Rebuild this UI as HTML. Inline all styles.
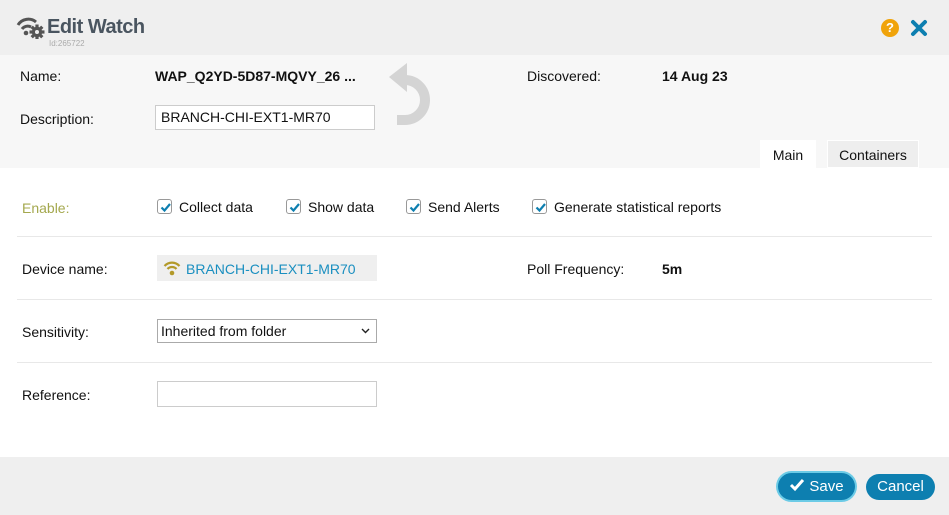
<!DOCTYPE html>
<html><head><meta charset="utf-8"><style>
*{box-sizing:border-box;margin:0;padding:0}
body{width:949px;height:515px;overflow:hidden;background:#fff;font-family:"Liberation Sans",sans-serif;font-size:14px;color:#111;position:relative}
.a{position:absolute;white-space:nowrap}
.hdr{left:0;top:0;width:949px;height:55px;background:#efefef}
.info{left:0;top:55px;width:949px;height:113px;background:#f7f7f7}
.ftr{left:0;top:457px;width:949px;height:58px;background:#efefef}
.line{left:17px;width:915px;height:1px;background:#e8e8e8}
.cb{display:inline-block;width:15px;height:15px;border:1px solid #999;border-radius:3px;background:#fff;vertical-align:-2px;margin-right:7px;position:relative}
.cb svg{position:absolute;left:1px;top:1px}
.inp{border:1px solid #ccc;background:#fff;height:25px}
.btn{background:#0d7fb0;color:#fff;border-radius:14px;height:27px;font-size:15px;text-align:center;line-height:27px}
</style></head><body>
<div class="a hdr"></div>
<div class="a info"></div>
<div class="a ftr"></div>

<svg class="a" style="left:16px;top:17px" width="30" height="22" viewBox="0 0 30 22">
<path d="M2 8 A12 12 0 0 1 20 5" stroke="#555" stroke-width="3" fill="none"/>
<path d="M6 12 A7 7 0 0 1 15 10" stroke="#555" stroke-width="3" fill="none"/>
<circle cx="10" cy="16" r="2.3" fill="#555"/>
<g transform="translate(21,15)" fill="#555"><circle r="5.2"/><rect x="-1.6" y="-7.5" width="3.2" height="15"/><rect x="-7.5" y="-1.6" width="15" height="3.2"/><rect x="-1.6" y="-7.5" width="3.2" height="15" transform="rotate(45)"/><rect x="-1.6" y="-7.5" width="3.2" height="15" transform="rotate(-45)"/><circle r="2" fill="#efefef"/></g>
</svg>
<div class="a" style="left:47px;top:16px;font-size:20px;font-weight:bold;color:#4a5560;letter-spacing:-0.5px">Edit Watch</div>
<div class="a" style="left:49px;top:39px;font-size:8px;color:#aaa">Id:265722</div>

<div class="a" style="left:881px;top:19px;width:18px;height:18px;border-radius:50%;background:#f0a30a;color:#fff;font-weight:bold;font-size:13px;text-align:center;line-height:18px">?</div>
<svg class="a" style="left:910px;top:19px" width="18" height="18" viewBox="0 0 18 18"><path d="M3 3 L15 15 M15 3 L3 15" stroke="#0d7fb0" stroke-width="4" stroke-linecap="round"/></svg>

<div class="a" style="left:20px;top:68px">Name:</div>
<div class="a" style="left:155px;top:68px;font-weight:bold">WAP_Q2YD-5D87-MQVY_26 ...</div>
<svg class="a" style="left:388px;top:60px" width="50" height="70" viewBox="0 0 50 70">
<path d="M14 20 H17 A20 20 0 0 1 17 60 H9" stroke="#d4d4d4" stroke-width="10" fill="none"/>
<polygon points="1,17 19,3 19,32" fill="#d4d4d4"/>
</svg>
<div class="a" style="left:527px;top:68px">Discovered:</div>
<div class="a" style="left:662px;top:68px;font-weight:bold">14 Aug 23</div>
<div class="a" style="left:20px;top:111px">Description:</div>
<div class="a inp" style="left:155px;top:105px;width:220px;padding:3px 5px;line-height:17px">BRANCH-CHI-EXT1-MR70</div>

<div class="a" style="left:760px;top:140px;width:56px;height:28px;background:#fff;text-align:center;line-height:30px">Main</div>
<div class="a" style="left:827px;top:140px;width:92px;height:28px;background:#eee;border:1px solid #fff;text-align:center;line-height:28px">Containers</div>

<div class="a" style="left:22px;top:200px;color:#a4a84e">Enable:</div>
<svg width="0" height="0" style="position:absolute"><defs><path id="ck" d="M2.5 6.5 L5.5 9.5 L11 3" stroke="#0d7fb0" stroke-width="2.2" fill="none"/></defs></svg>
<div class="a" style="left:157px;top:199px"><span class="cb"><svg width="13" height="13"><use href="#ck"/></svg></span>Collect data</div>
<div class="a" style="left:286px;top:199px"><span class="cb"><svg width="13" height="13"><use href="#ck"/></svg></span>Show data</div>
<div class="a" style="left:406px;top:199px"><span class="cb"><svg width="13" height="13"><use href="#ck"/></svg></span>Send Alerts</div>
<div class="a" style="left:532px;top:199px"><span class="cb"><svg width="13" height="13"><use href="#ck"/></svg></span>Generate statistical reports</div>

<div class="a line" style="top:236px"></div>
<div class="a" style="left:22px;top:261px">Device name:</div>
<div class="a" style="left:157px;top:255px;width:220px;height:26px;background:#efefef"></div>
<svg class="a" style="left:163px;top:260px" width="18" height="16" viewBox="0 0 18 16">
<path d="M1.5 6 A10 10 0 0 1 16.5 6" stroke="#b39a2a" stroke-width="2.2" fill="none"/>
<path d="M4.5 9 A6 6 0 0 1 13.5 9" stroke="#b39a2a" stroke-width="2.2" fill="none"/>
<circle cx="9" cy="13" r="2.3" fill="#b39a2a"/></svg>
<div class="a" style="left:186px;top:261px;color:#1a8fc0">BRANCH-CHI-EXT1-MR70</div>
<div class="a" style="left:527px;top:261px">Poll Frequency:</div>
<div class="a" style="left:662px;top:261px;font-weight:bold">5m</div>

<div class="a line" style="top:299px"></div>
<div class="a" style="left:22px;top:324px">Sensitivity:</div>
<div class="a inp" style="left:157px;top:319px;width:220px;height:24px;border-color:#aaa;padding:2px 3px;line-height:18px">Inherited from folder
<svg style="position:absolute;right:6px;top:8px" width="9" height="6"><path d="M1 1 L4.5 4.5 L8 1" stroke="#222" stroke-width="1.4" fill="none"/></svg></div>

<div class="a line" style="top:362px"></div>
<div class="a" style="left:22px;top:387px">Reference:</div>
<div class="a inp" style="left:157px;top:381px;width:220px;height:26px"></div>

<div class="a btn" style="left:778px;top:473px;width:77px;box-shadow:0 0 0 2px #6ccbe6"><svg width="16" height="14" viewBox="0 0 16 14" style="vertical-align:-1px;margin-right:4px"><path d="M2 7 L6 11 L14 2" stroke="#fff" stroke-width="3" fill="none"/></svg>Save</div>
<div class="a btn" style="left:866px;top:474px;width:69px;height:26px;line-height:26px">Cancel</div>
</body></html>
